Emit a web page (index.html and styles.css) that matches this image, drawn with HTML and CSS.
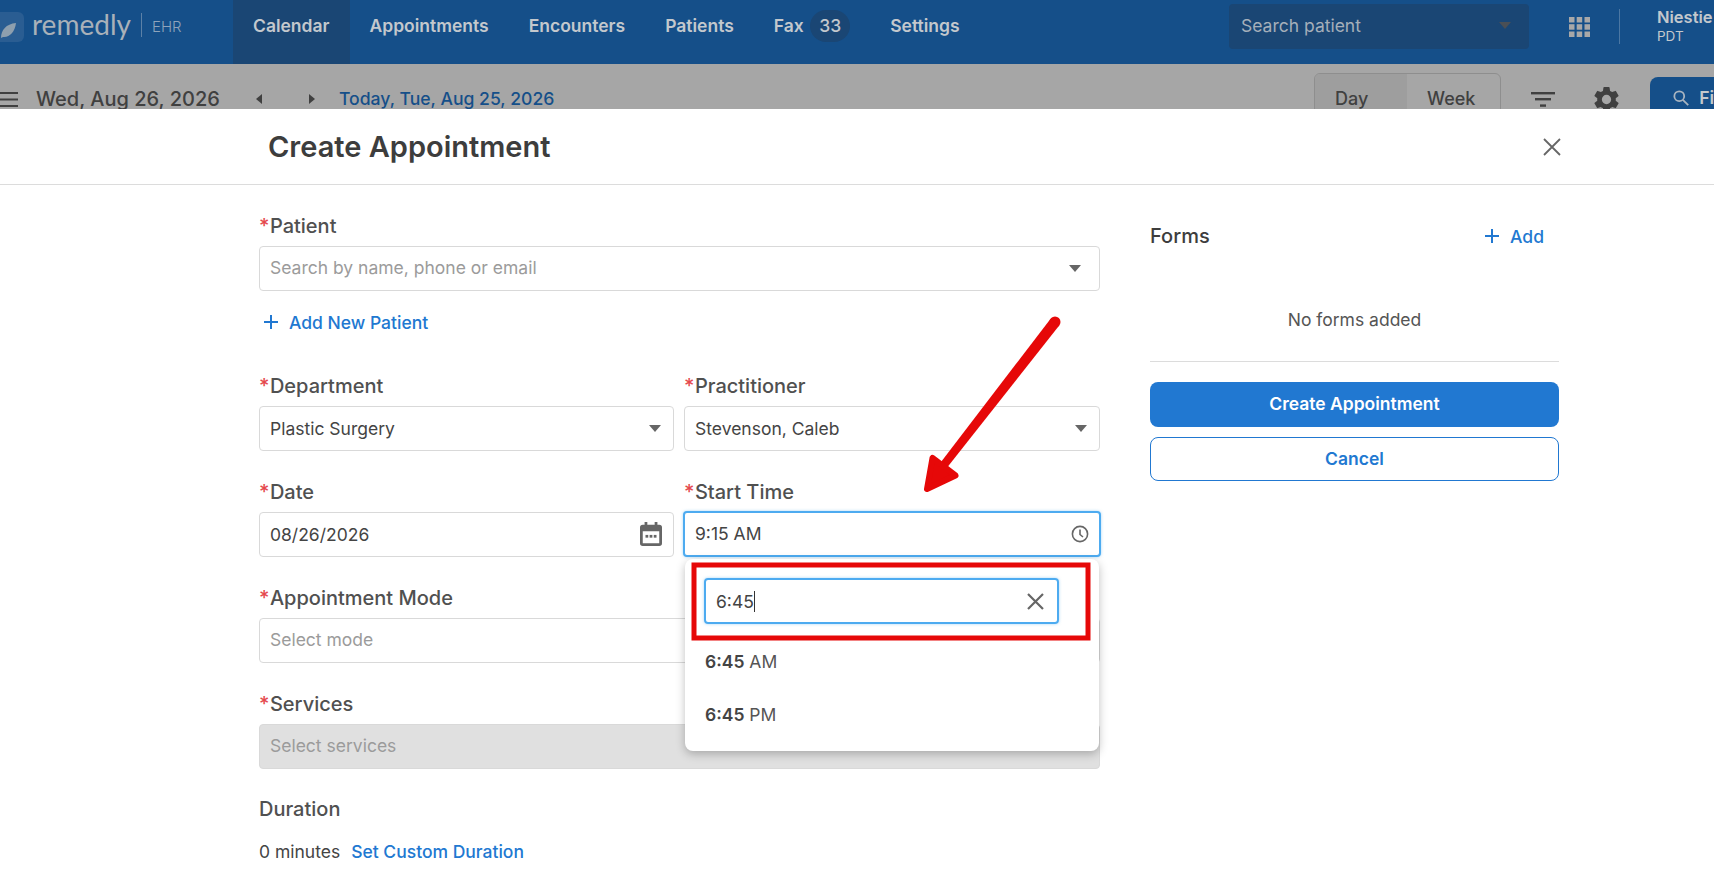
FILE: index.html
```html
<!DOCTYPE html>
<html lang="en">
  <head>
    <meta charset="UTF-8" />
    <meta name="viewport" content="width=device-width, initial-scale=1.0" />
    <title>Create Appointment</title>
    <link rel="stylesheet" href="styles.css">
  </head>
  <body>
    <header class="app-header">
      <div class="brand">
        <span class="brand-mark">
          <svg width="24" height="24" viewBox="0 0 24 24"><path d="M1 23C1 15 6 9 16 8 15 17 9 23 3 22Z" fill="#8e9fae"/></svg>
        </span>
        <span class="brand-name">remedly</span>
        <span class="brand-sub">EHR</span>
      </div>
      <nav class="tabs">
        <a class="tab active">Calendar</a>
        <a class="tab">Appointments</a>
        <a class="tab">Encounters</a>
        <a class="tab">Patients</a>
        <a class="tab">Fax <span class="badge">33</span></a>
        <a class="tab">Settings</a>
      </nav>
      <div class="header-right">
        <div class="patient-search">
          <span>Search patient</span>
          <span class="caret caret-dark"></span>
        </div>
        <svg class="apps" width="21" height="20" viewBox="0 0 21 20" fill="#a8a8a8">
          <rect width="5.5" height="5.5"/><rect x="7.7" width="5.5" height="5.5"/><rect x="15.5" width="5.5" height="5.5"/>
          <rect y="7.2" width="5.5" height="5.5"/><rect x="7.7" y="7.2" width="5.5" height="5.5"/><rect x="15.5" y="7.2" width="5.5" height="5.5"/>
          <rect y="14.5" width="5.5" height="5.5"/><rect x="7.7" y="14.5" width="5.5" height="5.5"/><rect x="15.5" y="14.5" width="5.5" height="5.5"/>
        </svg>
        <div class="user">
          <div class="user-name">Niestie</div>
          <div class="user-zone">PDT</div>
        </div>
      </div>
    </header>

    <div class="toolbar">
      <div class="toolbar-left">
        <svg class="menu-icon" width="18" height="15" viewBox="0 0 18 15" fill="#404040"><rect width="18" height="2"/><rect y="6.5" width="18" height="2"/><rect y="13" width="18" height="2"/></svg>
        <span class="current-date">Wed, Aug 26, 2026</span>
        <span class="arrow-left"></span>
        <span class="arrow-right"></span>
        <a class="today">Today, Tue, Aug 25, 2026</a>
      </div>
      <div class="toolbar-right">
        <div class="view-toggle">
          <span class="view active">Day</span>
          <span class="view">Week</span>
        </div>
        <svg class="filter-icon" width="24" height="15" viewBox="0 0 24 15" fill="#404040"><rect width="24" height="2.4"/><rect x="4" y="6" width="16" height="2.4"/><rect x="9" y="12.4" width="6" height="2.4"/></svg>
        <svg class="gear-icon" width="31" height="31" viewBox="0 0 24 24" fill="#404040"><path d="M19.14 12.94c.04-.3.06-.61.06-.94s-.02-.64-.07-.94l2.03-1.58a.49.49 0 0 0 .12-.61l-1.92-3.32a.49.49 0 0 0-.59-.22l-2.39.96a7 7 0 0 0-1.62-.94l-.36-2.54a.48.48 0 0 0-.48-.41h-3.84c-.24 0-.43.17-.47.41l-.36 2.54c-.59.24-1.13.57-1.62.94l-2.39-.96a.48.48 0 0 0-.59.22L2.74 8.87a.48.48 0 0 0 .12.61l2.03 1.58c-.05.3-.09.63-.09.94s.02.64.07.94l-2.03 1.58a.49.49 0 0 0-.12.61l1.92 3.32c.12.22.37.29.59.22l2.39-.96c.5.38 1.03.7 1.62.94l.36 2.54c.05.24.24.41.48.41h3.84c.24 0 .44-.17.47-.41l.36-2.54c.59-.24 1.13-.56 1.62-.94l2.39.96c.22.08.47 0 .59-.22l1.92-3.32a.48.48 0 0 0-.12-.61zM12 15.6a3.6 3.6 0 1 1 0-7.2 3.6 3.6 0 0 1 0 7.2z"/></svg>
        <div class="find-btn">
          <svg width="18" height="18" viewBox="0 0 18 18" fill="none" stroke="#a8b4c0" stroke-width="2"><circle cx="7" cy="7" r="5.5"/><path d="M11 11l6 6"/></svg>
          <span>Fi</span>
        </div>
      </div>
    </div>

    <main class="modal">
      <div class="modal-head">
        <h1 class="modal-title">Create Appointment</h1>
        <svg class="modal-close" width="18" height="18" viewBox="0 0 18 18" stroke="#666" stroke-width="1.8"><path d="M1 1l16 16M17 1L1 17"/></svg>
      </div>
      <div class="modal-body">
        <div class="form-col">
          <div class="field">
            <label class="field-label"><i>*</i>Patient</label>
            <div class="input placeholder">Search by name, phone or email<span class="caret"></span></div>
          </div>
          <a class="add-link add-patient">
            <svg width="14" height="14" viewBox="0 0 14 14" stroke="#2178d1" stroke-width="2"><path d="M7 0v14M0 7h14"/></svg>
            Add New Patient
          </a>
          <div class="form-grid">
            <div class="field">
              <label class="field-label"><i>*</i>Department</label>
              <div class="input">Plastic Surgery<span class="caret"></span></div>
            </div>
            <div class="field">
              <label class="field-label"><i>*</i>Practitioner</label>
              <div class="input">Stevenson, Caleb<span class="caret"></span></div>
            </div>
            <div class="field">
              <label class="field-label"><i>*</i>Date</label>
              <div class="input">08/26/2026
                <svg class="input-icon calendar-icon" width="22" height="24" viewBox="0 0 24 26" fill="#666"><path d="M5 0h3v3h8V0h3v3h2a3 3 0 0 1 3 3v17a3 3 0 0 1-3 3H3a3 3 0 0 1-3-3V6a3 3 0 0 1 3-3h2zM3 10v13h18V10z"/><rect x="6" y="14" width="3" height="3"/><rect x="10.5" y="14" width="3" height="3"/><rect x="15" y="14" width="3" height="3"/></svg>
              </div>
            </div>
            <div class="field">
              <label class="field-label"><i>*</i>Start Time</label>
              <div class="input focused">9:15 AM
                <svg class="input-icon" width="18" height="18" viewBox="0 0 18 18" fill="none" stroke="#666" stroke-width="1.6"><circle cx="9" cy="9" r="7.6"/><path d="M9 4.5V9.5l3 2.5"/></svg>
              </div>
              <div class="time-menu">
                <div class="time-search">
                  <span>6:45</span><span class="text-caret"></span>
                  <svg width="17" height="17" viewBox="0 0 17 17" stroke="#666" stroke-width="2.2"><path d="M1 1l15 15M16 1L1 16"/></svg>
                </div>
                <div class="time-option"><b>6:45</b> AM</div>
                <div class="time-option"><b>6:45</b> PM</div>
              </div>
            </div>
            <div class="field span-2">
              <label class="field-label"><i>*</i>Appointment Mode</label>
              <div class="input placeholder">Select mode</div>
            </div>
            <div class="field span-2">
              <label class="field-label"><i>*</i>Services</label>
              <div class="input placeholder disabled">Select services</div>
            </div>
            <div class="field span-2 duration-field">
              <label class="field-label">Duration</label>
              <div class="duration">0 minutes <a class="duration-link">Set Custom Duration</a></div>
            </div>
          </div>
        </div>

        <aside class="side-col">
          <div class="forms-head">
            <span class="forms-title">Forms</span>
            <a class="add-link">
              <svg width="14" height="14" viewBox="0 0 14 14" stroke="#2178d1" stroke-width="2"><path d="M7 0v14M0 7h14"/></svg>
              Add
            </a>
          </div>
          <p class="forms-empty">No forms added</p>
          <button class="btn btn-primary">Create Appointment</button>
          <button class="btn btn-outline">Cancel</button>
        </aside>
      </div>
    </main>

    <!-- red markup drawn on top of the screenshot -->
    <svg class="markup" width="1714" height="873" viewBox="0 0 1714 873" fill="#e60808">
      <rect x="694" y="565" width="394" height="73" fill="none" stroke="#e60808" stroke-width="5"/>
      <circle cx="1055" cy="322" r="5.5"/>
      <path d="M1059.4 325.3L1050.6 318.7 936.8 467.6 943.2 472.4Z"/>
      <path d="M932.5 458L927 489 955.5 475.5Z" stroke="#e60808" stroke-width="6" stroke-linejoin="round"/>
    </svg>
  </body>
</html>
```

FILE: styles.css
```css
* {
  box-sizing: border-box;
}
body {
  margin: 0;
  height: 873px;
  overflow: hidden;
  position: relative;
  background: #fff;
  font-family: Inter, "Noto Sans", sans-serif;
  font-size: 17.5px;
  color: #444;
}

/* top bar */
.app-header {
  display: grid;
  grid-template-columns: 233px 996px 1fr;
  height: 64px;
  background: #154f89;
  color: #c3c8cd;
}
.brand {
  display: flex;
  align-items: center;
  padding-bottom: 11px;
}
.brand-mark {
  width: 24px;
  height: 30px;
  margin-right: 8px;
  background: #2a5d92;
  border-radius: 0 6px 6px 0;
  display: flex;
  align-items: center;
}
.brand-name {
  font-family: Lato, sans-serif;
  font-size: 28px;
  color: #a9b1b9;
  margin-top: -3px;
  width: 110px;
  border-right: 1px solid #5c81a7;
  line-height: 23px;
  padding-bottom: 1px;
}
.brand-sub {
  margin-left: 10px;
  font-size: 15px;
  color: #8ea4bb;
  font-weight: 300;
}
.tabs {
  display: flex;
  align-items: stretch;
}
.tab {
  display: flex;
  align-items: center;
  padding: 0 20px 13px;
  font-weight: 600;
  white-space: pre;
}
.tab.active {
  background: #1a4674;
}
.badge {
  display: inline-block;
  width: 40px;
  height: 32px;
  line-height: 32px;
  margin-left: 2px;
  text-align: center;
  font-weight: 500;
  background: #1a4674;
  border-radius: 16px;
}
.header-right {
  display: flex;
  align-items: flex-start;
  white-space: nowrap;
}
.patient-search {
  width: 300px;
  height: 45px;
  margin-top: 4px;
  padding: 0 18px 2px 12px;
  display: flex;
  align-items: center;
  justify-content: space-between;
  background: #1a4674;
  border-radius: 4px;
  color: #a5afba;
}
.apps {
  margin-left: 40px;
  margin-top: 17px;
}
.user {
  margin-left: 29px;
  margin-top: 9px;
  padding-left: 37px;
  height: 35px;
  border-left: 1px solid #4b77a3;
  flex-shrink: 0;
}
.user-name {
  font-size: 16.5px;
  font-weight: 600;
  line-height: 16px;
}
.user-zone {
  font-size: 13.5px;
  line-height: 22px;
  font-weight: 400;
}

/* calendar toolbar, mostly hidden behind the modal */
.toolbar {
  display: grid;
  grid-template-columns: 1314px 1fr;
  height: 45px;
  overflow: hidden;
  background: #a6a6a6;
  color: #404040;
}
.toolbar-left {
  display: flex;
  align-items: flex-start;
  padding-top: 25px;
}
.menu-icon {
  margin-top: 3px;
}
.current-date {
  margin-left: 18px;
  font-size: 20px;
  font-weight: 500;
  line-height: 20px;
}
.arrow-left,
.arrow-right {
  width: 0;
  height: 0;
  margin-top: 5px;
  border-top: 5px solid transparent;
  border-bottom: 5px solid transparent;
}
.arrow-left {
  margin-left: 36px;
  border-right: 6px solid #404040;
}
.arrow-right {
  margin-left: 47px;
  border-left: 6px solid #404040;
}
.today {
  margin-left: 24px;
  font-size: 17.6px;
  font-weight: 500;
  line-height: 20px;
  color: #154f89;
}
.toolbar-right {
  display: flex;
  align-items: flex-start;
  white-space: nowrap;
}
.view-toggle {
  display: flex;
  width: 187px;
  height: 60px;
  margin-top: 9px;
  border: 1px solid #8e8e8e;
  border-radius: 6px;
  overflow: hidden;
  font-weight: 500;
  font-size: 18px;
}
.view {
  width: 92px;
  padding: 14px 0 0 20px;
}
.view.active {
  background: #9e9e9e;
}
.filter-icon {
  margin-left: 30px;
  margin-top: 28px;
}
.gear-icon {
  margin-left: 36px;
  margin-top: 20px;
}
.find-btn {
  display: flex;
  gap: 10px;
  width: 64px;
  height: 60px;
  margin-left: 28px;
  margin-top: 13px;
  padding: 10px 0 0 23px;
  background: #154f89;
  border-radius: 8px 0 0 8px;
  color: #c3c8cd;
  font-weight: 600;
}
.find-btn svg {
  margin-top: 2px;
}

/* modal */
.modal-head {
  display: flex;
  align-items: center;
  justify-content: space-between;
  height: 76px;
  padding: 0 153px 0 268px;
  border-bottom: 1px solid #dcdcdc;
}
.modal-title {
  margin: 0;
  font-size: 29px;
  font-weight: 600;
  color: #3d3d3d;
}
.modal-body {
  display: flex;
  gap: 50px;
  padding: 30px 0 0 259px;
}
.form-col {
  width: 841px;
}
.side-col {
  width: 409px;
  padding-top: 10px;
}
.field {
  position: relative;
}
.field-label {
  display: block;
  height: 22px;
  margin-bottom: 9px;
  font-size: 20px;
  line-height: 22px;
  font-weight: 500;
  color: #505050;
}
.field-label i {
  margin-right: 0.5px;
  color: #e5484d;
  font-style: normal;
}
.input {
  display: flex;
  align-items: center;
  justify-content: space-between;
  height: 45px;
  padding: 0 10px 1px;
  background: #fff;
  border: 1px solid #d9d9d9;
  border-radius: 4px;
}
.input.placeholder {
  padding-bottom: 3px;
  color: #9b9b9b;
}
.placeholder .caret {
  margin-top: 2px;
}
.input.disabled {
  background: #e0e0e0;
}
.input.focused {
  height: 46px;
  margin: -1px -1px 0;
  border: 2px solid #4dabf0;
  box-shadow: 0 0 3px rgba(77, 171, 240, 0.5);
}
.caret {
  width: 0;
  height: 0;
  margin-right: 8px;
  border-left: 6.5px solid transparent;
  border-right: 6.5px solid transparent;
  border-top: 7px solid #666;
}
.form-grid .caret {
  margin-right: 2.5px;
}
.caret-dark {
  margin-right: 0;
  border-top-color: #4a4f55;
}
.calendar-icon {
  margin-right: 1px;
}
.add-link {
  display: inline-flex;
  align-items: center;
  gap: 11px;
  font-weight: 500;
  color: #2178d1;
}
.add-patient {
  height: 22px;
  margin: 20px 0 42px 5px;
  display: flex;
}
.form-grid {
  display: grid;
  grid-template-columns: 415px 416px;
  gap: 30px 10px;
}
.span-2 {
  grid-column: span 2;
}
.duration-field {
  margin-top: -1px;
}
.duration {
  margin-top: 21px;
  line-height: 22px;
}
.duration-link {
  margin-left: 6px;
  font-weight: 500;
  color: #2178d1;
}

/* start time dropdown */
.time-menu {
  position: absolute;
  top: 78px;
  left: 1px;
  right: 1px;
  height: 192px;
  padding: 19px 0 0 19px;
  background: #fff;
  border-radius: 8px;
  box-shadow: 0 3px 10px rgba(0, 0, 0, 0.25);
  z-index: 2;
}
.time-search {
  display: flex;
  align-items: center;
  width: 355px;
  height: 46px;
  margin-bottom: 11px;
  padding: 0 13px 0 10px;
  border: 2px solid #4dabf0;
  border-radius: 4px;
  box-shadow: 0 0 3px rgba(77, 171, 240, 0.5);
}
.text-caret {
  width: 1.5px;
  height: 21px;
  background: #333;
}
.time-search svg {
  margin-left: auto;
}
.time-option {
  height: 53px;
  padding-left: 1px;
  line-height: 53px;
  color: #555;
}
.time-option b {
  font-weight: 600;
  color: #444;
}

/* forms panel */
.forms-head {
  display: flex;
  align-items: center;
  justify-content: space-between;
  height: 22px;
  padding-right: 15px;
}
.forms-title {
  font-size: 20px;
  font-weight: 500;
  color: #3d3d3d;
}
.forms-empty {
  height: 53px;
  margin: 62px 0 20px;
  line-height: 22px;
  text-align: center;
  color: #555;
  border-bottom: 1px solid #dcdcdc;
}
.btn {
  display: block;
  width: 100%;
  font-family: inherit;
  font-size: 17.5px;
  font-weight: 600;
  border-radius: 8px;
}
.btn-primary {
  height: 45px;
  margin-bottom: 10px;
  padding-bottom: 3px;
  border: none;
  background: #2178d1;
  color: #fff;
}
.btn-outline {
  height: 44px;
  padding-bottom: 3px;
  border: 1px solid #2178d1;
  background: #fff;
  color: #2178d1;
}

.markup {
  position: absolute;
  top: 0;
  left: 0;
  z-index: 5;
  pointer-events: none;
}
```
